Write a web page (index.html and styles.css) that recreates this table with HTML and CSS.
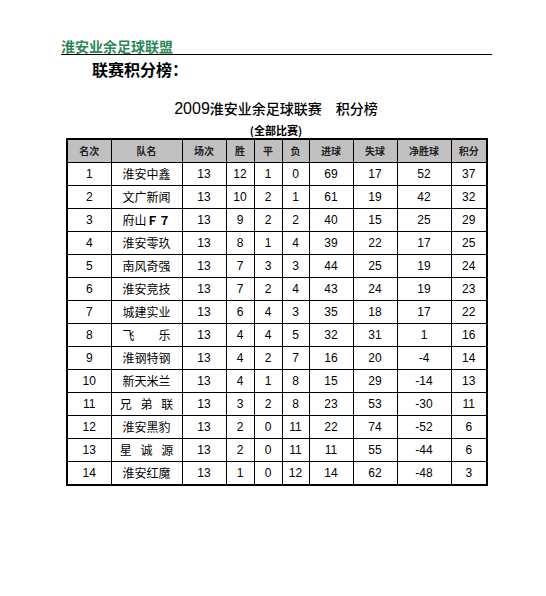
FILE: index.html
```html
<!DOCTYPE html>
<html lang="zh">
<head>
<meta charset="utf-8">
<title>淮安业余足球联盟</title>
<link rel="stylesheet" href="styles.css">
</head>
<body>
<div class="page">
  <div class="site-title">淮安业余足球联盟</div>
  <div class="section-title">联赛积分榜：</div>
  <div class="board">
    <div class="board-title"><span class="num">2009</span>淮安业余足球联赛　积分榜</div>
    <div class="board-sub">(全部比赛)</div>
    <table class="standings">
      <colgroup>
        <col class="c1"><col class="c2"><col class="c3"><col class="c4"><col class="c5">
        <col class="c6"><col class="c7"><col class="c8"><col class="c9"><col class="c10">
      </colgroup>
      <thead>
        <tr><th>名次</th><th>队名</th><th>场次</th><th>胜</th><th>平</th><th>负</th><th>进球</th><th>失球</th><th>净胜球</th><th>积分</th></tr>
      </thead>
      <tbody>
        <tr><td>1</td><td class="team">淮安中鑫</td><td>13</td><td>12</td><td>1</td><td>0</td><td>69</td><td>17</td><td>52</td><td>37</td></tr>
        <tr><td>2</td><td class="team">文广新闻</td><td>13</td><td>10</td><td>2</td><td>1</td><td>61</td><td>19</td><td>42</td><td>32</td></tr>
        <tr><td>3</td><td class="team">府山<b class="fw">Ｆ７</b></td><td>13</td><td>9</td><td>2</td><td>2</td><td>40</td><td>15</td><td>25</td><td>29</td></tr>
        <tr><td>4</td><td class="team">淮安零玖</td><td>13</td><td>8</td><td>1</td><td>4</td><td>39</td><td>22</td><td>17</td><td>25</td></tr>
        <tr><td>5</td><td class="team">南风奇强</td><td>13</td><td>7</td><td>3</td><td>3</td><td>44</td><td>25</td><td>19</td><td>24</td></tr>
        <tr><td>6</td><td class="team">淮安竞技</td><td>13</td><td>7</td><td>2</td><td>4</td><td>43</td><td>24</td><td>19</td><td>23</td></tr>
        <tr><td>7</td><td class="team">城建实业</td><td>13</td><td>6</td><td>4</td><td>3</td><td>35</td><td>18</td><td>17</td><td>22</td></tr>
        <tr><td>8</td><td class="team">飞　　乐</td><td>13</td><td>4</td><td>4</td><td>5</td><td>32</td><td>31</td><td>1</td><td>16</td></tr>
        <tr><td>9</td><td class="team">淮钢特钢</td><td>13</td><td>4</td><td>2</td><td>7</td><td>16</td><td>20</td><td>-4</td><td>14</td></tr>
        <tr><td>10</td><td class="team">新天米兰</td><td>13</td><td>4</td><td>1</td><td>8</td><td>15</td><td>29</td><td>-14</td><td>13</td></tr>
        <tr><td>11</td><td class="team spaced">兄 弟 联</td><td>13</td><td>3</td><td>2</td><td>8</td><td>23</td><td>53</td><td>-30</td><td>11</td></tr>
        <tr><td>12</td><td class="team">淮安黑豹</td><td>13</td><td>2</td><td>0</td><td>11</td><td>22</td><td>74</td><td>-52</td><td>6</td></tr>
        <tr><td>13</td><td class="team spaced">星 诚 源</td><td>13</td><td>2</td><td>0</td><td>11</td><td>11</td><td>55</td><td>-44</td><td>6</td></tr>
        <tr><td>14</td><td class="team">淮安红魔</td><td>13</td><td>1</td><td>0</td><td>12</td><td>14</td><td>62</td><td>-48</td><td>3</td></tr>
      </tbody>
    </table>
  </div>
</div>
</body>
</html>
```

FILE: styles.css
```css
html, body {
  margin: 0;
  padding: 0;
  background: #ffffff;
}

body {
  font-family: "Liberation Sans", "Noto Sans CJK SC", sans-serif;
  color: #000;
}

.page {
  padding: 38px 0 0 61px;
  width: 431px;
}

.site-title {
  font-family: "Noto Sans CJK SC", sans-serif;
  font-size: 14px;
  font-weight: bold;
  line-height: 16px;
  color: #2b8856;
  border-bottom: 1px solid #000;
}

.section-title {
  font-family: "Noto Sans CJK SC", sans-serif;
  font-size: 16px;
  font-weight: bold;
  line-height: 20px;
  margin: 4px 0 0 31px;
}

.board {
  margin: 19px 0 0 5px;
  width: 420px;
}

.board-title {
  font-family: "Noto Sans CJK SC", sans-serif;
  font-size: 14px;
  font-weight: 500;
  line-height: 20px;
  text-align: center;
}

.board-title .num {
  font-family: "Liberation Sans", sans-serif;
  font-size: 16px;
  font-weight: normal;
}

.board-sub {
  font-family: "Noto Sans CJK SC", sans-serif;
  font-size: 11px;
  font-weight: bold;
  line-height: 14px;
  margin-top: 4px;
  text-align: center;
}

.standings {
  margin-top: 1px;
  border-collapse: collapse;
  table-layout: fixed;
  width: 420px;
  border: 2px solid #000;
}

.standings th,
.standings td {
  border: 1px solid #000;
  padding: 0;
  height: 22px;
  text-align: center;
  vertical-align: middle;
  font-size: 12px;
  line-height: 14px;
}

.standings th {
  background: #c0c0c0;
  font-family: "Noto Sans CJK SC", sans-serif;
  font-size: 10px;
  font-weight: bold;
  color: #222;
}

.standings td.team {
  font-family: "Noto Sans CJK SC", sans-serif;
}

.standings td.spaced {
  word-spacing: 6px;
}

.standings .fw {
  font-weight: bold;
}

.c1 { width: 44px; }
.c2 { width: 71px; }
.c3 { width: 44px; }
.c4 { width: 28px; }
.c5 { width: 28px; }
.c6 { width: 27px; }
.c7 { width: 44px; }
.c8 { width: 44px; }
.c9 { width: 54px; }
.c10 { width: 36px; }
```
